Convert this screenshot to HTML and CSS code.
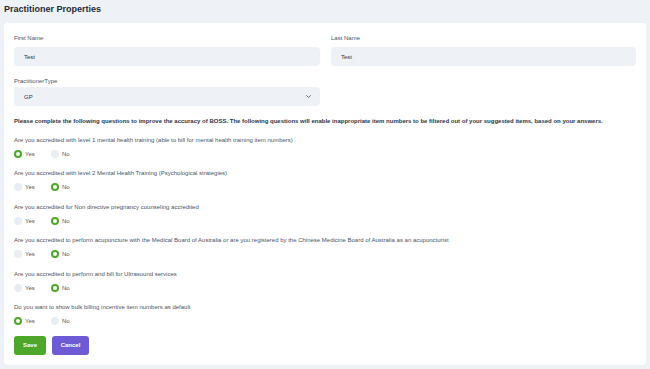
FILE: index.html
```html
<!DOCTYPE html>
<html lang="en">
<head>
    <meta charset="UTF-8">
    <title>Practitioner Properties</title>
    <link rel="stylesheet" href="styles.css">
</head>
<body>
    <h1 class="page-title">Practitioner Properties</h1>

    <div class="card">
        <div class="name-row">
            <div class="field">
                <label class="field-label">First Name</label>
                <input class="text-input" type="text" value="Test">
            </div>
            <div class="field">
                <label class="field-label">Last Name</label>
                <input class="text-input" type="text" value="Test">
            </div>
        </div>

        <div class="name-row">
            <div class="field">
                <label class="field-label">PractitionerType</label>
                <div class="select-box">
                    <span>GP</span>
                    <svg class="chevron" width="5" height="3" viewBox="0 0 10 6"><path d="M1 1l4 4 4-4" fill="none" stroke="#4a5568" stroke-width="1.6" stroke-linecap="round" stroke-linejoin="round"/></svg>
                </div>
            </div>
        </div>

        <p class="intro">Please complete the following questions to improve the accuracy of BOSS. The following questions will enable inappropriate item numbers to be filtered out of your suggested items, based on your answers.</p>

        <div class="question">
            <div class="question-text">Are you accredited with level 1 mental health training (able to bill for mental health training item numbers)</div>
            <div class="radio-row">
                <label class="radio-option"><input type="radio" name="q1" checked> Yes</label>
                <label class="radio-option"><input type="radio" name="q1"> No</label>
            </div>
        </div>
        <div class="question">
            <div class="question-text">Are you accredited with level 2 Mental Health Training (Psychological strategies)</div>
            <div class="radio-row">
                <label class="radio-option"><input type="radio" name="q2"> Yes</label>
                <label class="radio-option"><input type="radio" name="q2" checked> No</label>
            </div>
        </div>
        <div class="question">
            <div class="question-text">Are you accredited for Non directive pregnancy counseling accredited</div>
            <div class="radio-row">
                <label class="radio-option"><input type="radio" name="q3"> Yes</label>
                <label class="radio-option"><input type="radio" name="q3" checked> No</label>
            </div>
        </div>
        <div class="question">
            <div class="question-text">Are you accredited to perform acupuncture with the Medical Board of Australia or are you registered by the Chinese Medicine Board of Australia as an acupuncturist</div>
            <div class="radio-row">
                <label class="radio-option"><input type="radio" name="q4"> Yes</label>
                <label class="radio-option"><input type="radio" name="q4" checked> No</label>
            </div>
        </div>
        <div class="question">
            <div class="question-text">Are you accredited to perform and bill for Ultrasound services</div>
            <div class="radio-row">
                <label class="radio-option"><input type="radio" name="q5"> Yes</label>
                <label class="radio-option"><input type="radio" name="q5" checked> No</label>
            </div>
        </div>
        <div class="question">
            <div class="question-text">Do you want to show bulk billing incentive item numbers as default</div>
            <div class="radio-row">
                <label class="radio-option"><input type="radio" name="q6" checked> Yes</label>
                <label class="radio-option"><input type="radio" name="q6"> No</label>
            </div>
        </div>

        <div class="actions">
            <button class="btn btn-save">Save</button>
            <button class="btn btn-cancel">Cancel</button>
        </div>
    </div>
</body>
</html>
```

FILE: styles.css
```css
body {
    margin: 0;
    padding: 0 4px;
    background: #eef2f6;
    font-family: "Liberation Sans", Arial, sans-serif;
    color: #4a5568;
}
.page-title {
    margin: 0;
    height: 23px;
    line-height: 18px;
    font-size: 9px;
    font-weight: bold;
    color: #1e293b;
}
.card {
    background: #fff;
    border-radius: 4px;
    padding: 11px 10px 10px;
    height: 342px;
    box-sizing: border-box;
}
.name-row {
    display: grid;
    grid-template-columns: 306px 305px;
    gap: 11px;
    margin-bottom: 11px;
}
.field-label {
    display: block;
    font-size: 6px;
    line-height: 8px;
    margin-bottom: 5px;
}
.name-row:nth-child(2) .field-label {
    margin-bottom: 2px;
}
.text-input,
.select-box {
    display: flex;
    align-items: center;
    justify-content: space-between;
    box-sizing: border-box;
    width: 100%;
    height: 19px;
    padding: 0 9px 0 10px;
    border: none;
    border-radius: 4px;
    background: #eef2f6;
    font-family: inherit;
    font-size: 6px;
    color: #2d3748;
    outline: none;
}
.intro {
    margin: 1px 0 11px;
    font-size: 6px;
    line-height: 8px;
    font-weight: bold;
    color: #2d3748;
}
.question {
    margin-bottom: 11.4px;
}
.question-text {
    font-size: 6px;
    line-height: 8px;
    margin-bottom: 6px;
}
.radio-row {
    display: flex;
    height: 8px;
}
.radio-option {
    display: flex;
    align-items: center;
    gap: 3px;
    width: 37px;
    font-size: 6px;
    line-height: 8px;
}
.radio-option input {
    appearance: none;
    margin: 0;
    width: 8px;
    height: 8px;
    border-radius: 50%;
    background: #e9eef3;
}
.radio-option input:checked {
    background: #fff;
    border: 2px solid #4ca72a;
    box-sizing: border-box;
}
.actions {
    display: flex;
    gap: 6px;
    margin-top: -0.4px;
}
.btn {
    height: 19px;
    border: none;
    border-radius: 3px;
    color: #fff;
    font-family: inherit;
    font-size: 6px;
    font-weight: bold;
    padding: 0;
}
.btn-save {
    width: 32px;
    background: #4ca72a;
}
.btn-cancel {
    width: 37px;
    background: #6d5bd6;
}
```
